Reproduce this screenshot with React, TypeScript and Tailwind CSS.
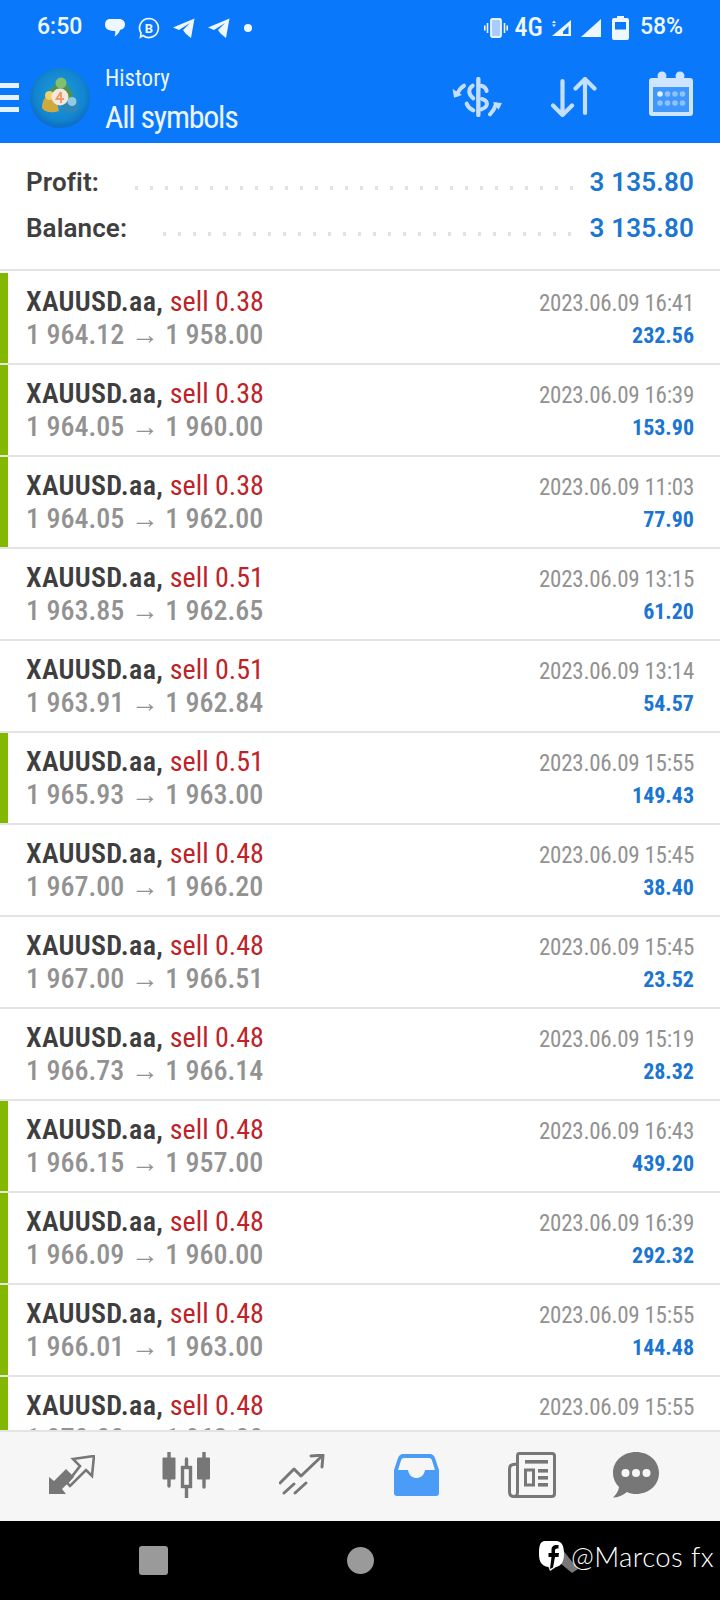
const rows = [
  { lots: "0.38", open: "1 964.12", close: "1 958.00", time: "2023.06.09 16:41", profit: "232.56", tp: true },
  { lots: "0.38", open: "1 964.05", close: "1 960.00", time: "2023.06.09 16:39", profit: "153.90", tp: true },
  { lots: "0.38", open: "1 964.05", close: "1 962.00", time: "2023.06.09 11:03", profit: "77.90", tp: true },
  { lots: "0.51", open: "1 963.85", close: "1 962.65", time: "2023.06.09 13:15", profit: "61.20", tp: false },
  { lots: "0.51", open: "1 963.91", close: "1 962.84", time: "2023.06.09 13:14", profit: "54.57", tp: false },
  { lots: "0.51", open: "1 965.93", close: "1 963.00", time: "2023.06.09 15:55", profit: "149.43", tp: true },
  { lots: "0.48", open: "1 967.00", close: "1 966.20", time: "2023.06.09 15:45", profit: "38.40", tp: false },
  { lots: "0.48", open: "1 967.00", close: "1 966.51", time: "2023.06.09 15:45", profit: "23.52", tp: false },
  { lots: "0.48", open: "1 966.73", close: "1 966.14", time: "2023.06.09 15:19", profit: "28.32", tp: false },
  { lots: "0.48", open: "1 966.15", close: "1 957.00", time: "2023.06.09 16:43", profit: "439.20", tp: true },
  { lots: "0.48", open: "1 966.09", close: "1 960.00", time: "2023.06.09 16:39", profit: "292.32", tp: true },
  { lots: "0.48", open: "1 966.01", close: "1 963.00", time: "2023.06.09 15:55", profit: "144.48", tp: true },
  { lots: "0.48", open: "1 970.00", close: "1 963.00", time: "2023.06.09 15:55", profit: "", tp: true },
];

const Row = ({ r }: { r: (typeof rows)[number] }) => (
  <div className="flex h-[92px] shrink-0 border-b-2 border-[#e4e4e4]">
    <div className={`w-[8px] ${r.tp ? "bg-[#83b800]" : "bg-transparent"}`} />
    <div className="flex-1 flex justify-between pl-[18px] pr-[26px] pt-[13px] [font-stretch:75%]">
      <div className="flex flex-col">
        <div className="text-[28px] leading-[32px] whitespace-nowrap">
          <span className="font-semibold tracking-[0.3px] text-[#3e3e3e]">XAUUSD.aa, </span>
          <span className="text-[#bd2329]">sell {r.lots}</span>
        </div>
        <div className="text-[28px] leading-[32px] mt-px font-medium text-[#929292] whitespace-nowrap">
          {r.open} <span className="font-normal">→</span> {r.close}
        </div>
      </div>
      <div className="flex flex-col items-end pt-[2px]">
        <div className="text-[23px] leading-[32px] tracking-[-0.25px] text-[#929292] whitespace-nowrap">{r.time}</div>
        <div className="text-[22px] leading-[32px] font-bold text-[#1a76d2]">{r.profit}</div>
      </div>
    </div>
  </div>
);

const Total = ({ label, value }: { label: string; value: string }) => (
  <div className="flex items-center h-[46px]">
    <span className="text-[26px] font-semibold tracking-[0.1px] text-[#3f3f3f]">{label}</span>
    <div className="flex-1 ml-[30px] mr-[13px] mt-[12px] h-[4px] bg-[radial-gradient(circle,#e2e2e2_2px,transparent_2px)] bg-[length:15px_4px]" />
    <span className="text-[26px] font-semibold tracking-[0.2px] text-[#1a76d2]">{value}</span>
  </div>
);

const Plane = () => (
  <svg width="22" height="20" viewBox="0 0 22 20" className="text-[#eef6ff]">
    <path d="M0 9.5 L21.5 0.5 L18 20 L12.5 15.5 L10 12 L17 5 L6 12 Z" fill="currentColor" />
  </svg>
);

const Logo = () => (
  <svg width="60" height="60" viewBox="0 0 60 60">
    <defs>
      <radialGradient id="bg" cx="50%" cy="45%" r="55%">
        <stop offset="0%" stopColor="#1f9fdc" />
        <stop offset="75%" stopColor="#1285cf" />
        <stop offset="100%" stopColor="#0c6cc4" />
      </radialGradient>
    </defs>
    <circle cx="30" cy="30" r="30" fill="url(#bg)" />
    <path d="M18 31 C18 21 24 17 27 16 L35 16 C39 18 43 24 44 32 L30 36 Z" fill="#4f9155" />
    <circle cx="31" cy="15" r="5.5" fill="#7fc06d" />
    <path d="M12 40 C12 34 14 30 17 28 L23 28 C26 32 28 37 29 43 C23 45 15 45 12 40 Z" fill="#cfa93f" />
    <circle cx="19.5" cy="27.5" r="4.5" fill="#ecd26b" />
    <path d="M31 41 C33 36 36 34 39 33 L46 33 C49 36 49 40 47 43 C42 46 36 45 31 41 Z" fill="#2f86b8" />
    <circle cx="42" cy="33.5" r="4.5" fill="#8fcbe6" />
    <circle cx="30" cy="29" r="8.5" fill="#f3e8dc" />
    <path d="M31 24 L26.5 31 L34 31 M31 24 L31 35" fill="none" stroke="#ee9a6c" strokeWidth="1.9" />
  </svg>
);

const StatusBar = () => (
  <div className="h-[53px] flex items-center pt-[2px] text-[#eef6ff]">
    <span className="ml-[37px] w-[68px] text-[23px] font-medium">6:50</span>
    <svg width="20" height="19" viewBox="0 0 20 19" fill="currentColor">
      <path d="M5 1 H14 C18 1 20 3.5 20 6.5 C20 9.5 18 11.5 15 12 C14.5 14 12.5 17 9.5 18.5 C10.5 16 10.5 14 10 13 C5 13 0 11.5 0 7 C0 3 2 1 5 1 Z" />
    </svg>
    <svg width="22" height="22" viewBox="0 0 22 22" className="ml-[13px]">
      <path d="M11 1.5 A9.5 9.5 0 1 1 5 18.5 L2.5 20 L3 16 A9.5 9.5 0 0 1 11 1.5 Z" fill="none" stroke="currentColor" strokeWidth="1.7" />
      <text x="11" y="15.5" textAnchor="middle" fontSize="13" fontWeight="700" fill="currentColor" fontFamily="Roboto">B</text>
    </svg>
    <div className="ml-[13px]"><Plane /></div>
    <div className="ml-[13px]"><Plane /></div>
    <div className="ml-[14px] w-[8px] h-[8px] rounded-full bg-[#eef6ff]" />
    <div className="flex-1" />
    <svg width="24" height="20" viewBox="0 0 24 20">
      <rect x="7" y="1" width="10" height="18" rx="1.5" fill="#a8cdfd" stroke="currentColor" strokeWidth="1.8" />
      <path d="M3.5 5 V15 M0.8 7.5 V12.5 M20.5 5 V15 M23.2 7.5 V12.5" stroke="currentColor" strokeWidth="1.6" />
    </svg>
    <span className="ml-[7px] text-[26px] font-medium [font-stretch:75%]">4G</span>
    <svg width="20" height="20" viewBox="0 0 20 20" className="ml-[8px]">
      <path d="M20 2 V18 H1 Z M17.5 8 L12 13.5 V16 H17.5 Z" fill="currentColor" fillRule="evenodd" />
      <path d="M3 2.5 L5 5 H1 Z M3 9 L1 6.5 H5 Z" fill="currentColor" />
    </svg>
    <svg width="20" height="18" viewBox="0 0 20 18" className="ml-[10px]">
      <path d="M20 0 V18 H0 Z" fill="currentColor" />
    </svg>
    <svg width="17" height="24" viewBox="0 0 17 24" className="ml-[11px]">
      <path d="M5 0 H12 V2 H15 Q17 2 17 4 V22 Q17 24 15 24 H2 Q0 24 0 22 V4 Q0 2 2 2 H5 Z" fill="currentColor" />
      <rect x="3" y="6" width="11" height="7.5" fill="#0a78fa" />
    </svg>
    <span className="ml-[11px] mr-[37px] text-[23px] font-medium">58%</span>
  </div>
);

const ExchangeIcon = () => (
  <svg width="50" height="40" viewBox="36 36 150 120" fill="none" stroke="#c4dffe" strokeWidth="12" strokeLinecap="round">
    <path d="M115 42 V150" strokeWidth="13" />
    <path d="M123 62 C134 64 138 68 140 78" />
    <path d="M98 62 C84 70 84 88 100 100" />
    <path d="M126 102 C146 108 146 126 124 133" />
    <path d="M80 116 C84 126 90 132 100 136" />
    <path d="M72 62 C62 68 56 76 52 88" />
    <path d="M38 72 L42 98 L66 90 Z" fill="#c4dffe" stroke="none" />
    <path d="M150 148 C158 140 164 130 168 118" />
    <path d="M186 114 L158 112 L176 134 Z" fill="#c4dffe" stroke="none" />
  </svg>
);

const SortIcon = () => (
  <svg width="46" height="40" viewBox="0 0 46 40" fill="none" stroke="#c4dffe" strokeWidth="4.2" strokeLinecap="round" strokeLinejoin="round">
    <path d="M11.5 4 V38 M2 28.5 L11.5 38 L21 28.5" />
    <path d="M34 36 V2 M24.5 11.5 L34 2 L43.5 11.5" />
  </svg>
);

const CalendarIcon = () => (
  <svg width="44" height="45" viewBox="0 0 44 45">
    <rect x="0" y="7" width="44" height="38" rx="3" fill="#cfe4ff" />
    <rect x="4" y="16" width="36" height="25" fill="#3f97fb" />
    <circle cx="13" cy="5" r="4.5" fill="#cfe4ff" />
    <circle cx="31" cy="5" r="4.5" fill="#cfe4ff" />
    <circle cx="11" cy="23" r="2.8" fill="#e6f1ff" />
    {[18.5, 26, 33.5].map((x) => <circle key={x} cx={x} cy="23" r="2.8" fill="#8fc1fd" />)}
    {[11, 18.5, 26, 33.5].map((x) => <circle key={x} cx={x} cy="32" r="2.8" fill="#8fc1fd" />)}
  </svg>
);

const TradeIcon = () => (
  <svg width="46" height="40" viewBox="0 0 46 40" fill="none" stroke="#777" strokeWidth="2.6">
    <path d="M0 39 V22 L5 26 L17 14 L25 22 L13 34 L17 39 Z" fill="#777" stroke="none" />
    <path d="M24 4 L45 1 L43 21 L37 15 L21 31 L18 28 L31 11 Z" />
  </svg>
);

const QuotesIcon = () => (
  <svg width="49" height="46" viewBox="0 0 49 46" fill="#777" stroke="#777" strokeWidth="3.4">
    <path d="M7 0 V34 M24.5 7 V46 M42 0 V35" strokeLinecap="round" />
    <rect x="0.5" y="5.5" width="13" height="22" rx="1" stroke="none" />
    <rect x="20.5" y="15.5" width="8" height="19" fill="#f6f6f6" />
    <rect x="35" y="5.5" width="13" height="22" rx="1" stroke="none" />
  </svg>
);

const ChartIcon = () => (
  <svg width="46" height="42" viewBox="0 0 46 42" fill="none" stroke="#777" strokeWidth="3" strokeLinecap="round" strokeLinejoin="round">
    <path d="M1 29 L15 15 L22 22 L43 2" />
    <path d="M32 2 L44 1 L43 13" />
    <path d="M5 39 L15 30 M16 39 L27 29" />
  </svg>
);

const HistoryIcon = () => (
  <svg width="45" height="42" viewBox="0 0 45 42">
    <path d="M10 0 H35 C39 0 40 2 41 4 L45 16 V39 Q45 42 42 42 H3 Q0 42 0 39 V16 L4 4 C5 2 6 0 10 0 Z" fill="#4a9cf7" />
    <path d="M10 4 H35 C37 4 37.5 5 38 6.5 L41 16 H31 C30 22 26 24 22.5 24 C19 24 15 22 14 16 H4 L7 6.5 C7.5 5 8 4 10 4 Z" fill="#f6f6f6" />
  </svg>
);

const NewsIcon = () => (
  <svg width="48" height="46" viewBox="0 0 48 46">
    <path d="M11 1.5 H44 Q46.5 1.5 46.5 4 V41.5 Q46.5 44.5 43.5 44.5 H6 Q1.5 44.5 1.5 40 V17 Q1.5 13 5 12.5 L9.5 12" fill="none" stroke="#777" strokeWidth="3" />
    <path d="M11 1.5 Q9.5 1.5 9.5 4 V40 Q9.5 44.5 6 44.5" fill="none" stroke="#777" strokeWidth="3" />
    <rect x="17" y="8" width="23" height="3.6" fill="#777" />
    <rect x="17.5" y="18" width="8" height="15" fill="none" stroke="#777" strokeWidth="3" />
    <rect x="30" y="17" width="10" height="3.6" fill="#777" />
    <rect x="30" y="24" width="10" height="3.6" fill="#777" />
    <rect x="30" y="31" width="10" height="3.6" fill="#777" />
  </svg>
);

const ChatIcon = () => (
  <svg width="46" height="46" viewBox="0 0 46 46">
    <path d="M23 0 C36 0 46 9 46 21 C46 33 36 42 23 42 C19.5 42 17 41.5 14 40 C10 43.5 5 45.5 0 45.5 C3 43 5.5 39 6 35 C2 31 0 26.5 0 21 C0 9 10 0 23 0 Z" fill="#777" />
    <circle cx="12.5" cy="21" r="4" fill="#f6f6f6" />
    <circle cx="23" cy="21" r="4" fill="#f6f6f6" />
    <circle cx="33.5" cy="21" r="4" fill="#f6f6f6" />
  </svg>
);

const navIcons = [<TradeIcon />, <QuotesIcon />, <ChartIcon />, <HistoryIcon />, <NewsIcon />];

export default function App() {
  return (
    <div className="relative w-[720px] h-[1600px] flex flex-col bg-white overflow-hidden font-['Roboto',sans-serif]">
      <div className="h-[143px] shrink-0 bg-[#0a78fa] text-white">
        <StatusBar />
        <div className="flex items-center h-[90px] pb-[1px]">
          <div className="flex flex-col gap-[7px] w-[19px] shrink-0">
            <div className="h-[5px] bg-[#e6f2ff]" />
            <div className="h-[5px] bg-[#e6f2ff]" />
            <div className="h-[5px] bg-[#e6f2ff]" />
          </div>
          <div className="ml-[11px]"><Logo /></div>
          <div className="flex flex-col ml-[15px] pt-[6px] text-[#eaf4ff] [font-stretch:75%]">
            <span className="text-[23px] leading-[28px]">History</span>
            <span className="text-[32px] leading-[40px] mt-[4px] tracking-[-1.25px]">All symbols</span>
          </div>
          <div className="flex-1" />
          <div className="flex items-center pb-[2px]">
            <ExchangeIcon />
            <div className="ml-[49px]"><SortIcon /></div>
            <div className="ml-[52px] mr-[27px] -mt-[6px]"><CalendarIcon /></div>
          </div>
        </div>
      </div>
      <div className="h-[128px] shrink-0 px-[26px] pt-[16px] border-b-2 border-[#e4e4e4]">
        <Total label="Profit:" value="3 135.80" />
        <Total label="Balance:" value="3 135.80" />
      </div>
      <div className="h-[1159px] shrink-0 overflow-hidden flex flex-col pt-[2px]">
        {rows.map((r, i) => (
          <Row r={r} key={i} />
        ))}
      </div>
      <div className="h-[91px] shrink-0 bg-[#f6f6f6] border-t-2 border-[#e4e4e4] flex items-center pl-[14px] pb-[3px]">
        {navIcons.map((icon, i) => (
          <div className="w-[115px] flex justify-center" key={i}>{icon}</div>
        ))}
        <div className="-ml-[11px] w-[115px] flex justify-center"><ChatIcon /></div>
      </div>
      <div className="flex-1 bg-black flex items-center pl-[139px] pb-[1px]">
        <div className="w-[29px] h-[29px] rounded-[3px] bg-[#9a9a9a]" />
        <div className="ml-[179px] w-[27px] h-[27px] rounded-full bg-[#9a9a9a]" />
      </div>
      <div className="absolute left-[538px] top-[1539px] flex items-center">
        <svg width="34" height="36" viewBox="0 0 34 36" className="overflow-visible">
          <path d="M24 10 L40 30 L34 34 L22 24 Z" fill="#777" />
          <path d="M7 2 H18 C24 2 26 7 26 15 C26 23 23 27 18 28 L12 32 L10.5 28 C3 27 1 22 1 15 C1 7 2 2 7 2 Z" fill="#fff" />
          <path d="M19 6 C15 6 13.5 8 13.5 11 V14 H10.5 V18 H13.5 L12 30 L15 28.5 L17 18 H20.5 L21 14 H17 V11.5 C17 10 18 9.5 20.5 9.5 V6 Z" fill="#000" />
        </svg>
        <span className="-ml-[1px] text-[27.5px] leading-none text-white font-['Lato',sans-serif] font-light tracking-[0.4px]">@Marcos fx</span>
      </div>
    </div>
  );
}
